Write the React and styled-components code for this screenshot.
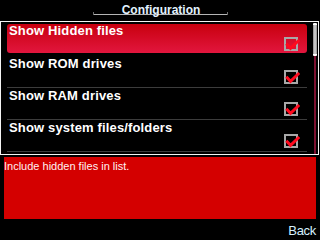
import React from "react";
import styled, { createGlobalStyle } from "styled-components";

const Global = createGlobalStyle`
  html, body { margin: 0; padding: 0; background: #000; }
  body { width: 320px; height: 240px; overflow: hidden; font-family: "Liberation Sans", Arial, sans-serif; }
`;

const Screen = styled.div`
  width: 320px;
  height: 240px;
  background: #000;
  display: flex;
  flex-direction: column;
`;

const Header = styled.div`
  height: 21px;
`;

const TitleBar = styled.div`
  position: relative;
  width: 135px;
  height: 14px;
  margin-left: 93px;
  border-bottom: 1px solid #b4b4b4;
  text-align: center;
  &::before, &::after {
    content: "";
    position: absolute;
    bottom: -1px;
    width: 1px;
    height: 3px;
    background: #707070;
  }
  &::before { left: 0; }
  &::after { right: 0; }
`;

const Title = styled.span`
  font-size: 12px;
  line-height: 14px;
  font-weight: bold;
  color: #e2f2ff;
  padding-left: 1px;
`;

const Frame = styled.div`
  width: 319px;
  height: 134px;
  box-sizing: border-box;
  border: 1px solid #f4f4f4;
  display: flex;
  overflow: hidden;
`;

const List = styled.div`
  flex: 1;
  padding-top: 1px;
  overflow: hidden;
`;

const Row = styled.div`
  width: 300px;
  height: 32px;
  box-sizing: border-box;
  margin-left: 6px;
  border-bottom: 1px solid ${(p) => (p.$selected ? "transparent" : "#3c3c3c")};
`;

const Cell = styled.div`
  position: relative;
  height: 29px;
  margin-top: ${(p) => (p.$selected ? "1px" : "0")};
  border-radius: 3px;
  overflow: hidden;
  background: ${(p) =>
    p.$selected ? "linear-gradient(#c8000e, #e2163e)" : "transparent"};
`;

const Label = styled.div`
  padding-left: 2px;
  font-size: 13px;
  line-height: ${(p) => (p.$selected ? "14px" : "15px")};
  font-weight: bold;
  letter-spacing: 0.15px;
  color: #fff;
  white-space: nowrap;
`;

const Check = styled.svg`
  position: absolute;
  left: 277px;
  top: ${(p) => (p.$selected ? "13px" : "14px")};
  overflow: visible;
`;

const ScrollCol = styled.div`
  width: 8px;
  padding-top: 1px;
  display: flex;
  flex-direction: column;
  align-items: center;
`;

const Thumb = styled.div`
  width: 4px;
  height: 33px;
  box-sizing: border-box;
  margin-left: 1px;
  border-radius: 1px;
  background: linear-gradient(90deg, #8a8a8a, #d8d8d8 50%, #8a8a8a);
  border-top: 2px solid #fff;
  border-bottom: 2px solid #fff;
`;

const Track = styled.div`
  flex: 1;
  width: 2px;
  margin-left: 1px;
  background: #7c1030;
`;

const Description = styled.div`
  margin: 2px 4px 0 4px;
  height: 62px;
  box-sizing: border-box;
  padding-top: 3px;
  background: #d40000;
  font-size: 11px;
  line-height: 13px;
  color: #fff2f2;
`;

const Footer = styled.div`
  display: flex;
  justify-content: flex-end;
  padding: 4px 4px 0 0;
`;

const SoftKey = styled.span`
  font-size: 13px;
  line-height: 15px;
  color: #d6f0ff;
  letter-spacing: -0.3px;
`;

const CheckIcon = ({ selected }) => (
  <Check $selected={selected} width="14" height="14" viewBox="0 0 14 14">
    <rect x="1" y="1" width="12" height="12" fill="none" stroke="#a8a8a8" strokeWidth="2" />
    <polyline
      points="2.3,6.8 6.5,11.3 15.2,3"
      fill="none"
      stroke="#ff0a1e"
      strokeWidth="3"
      strokeLinejoin="miter"
    />
  </Check>
);

const items = [
  { label: "Show Hidden files", checked: true, selected: true },
  { label: "Show ROM drives", checked: true },
  { label: "Show RAM drives", checked: true },
  { label: "Show system files/folders", checked: true },
  { label: "Sort by name", checked: true },
];

export default function App() {
  return (
    <Screen>
      <Global />
      <Header>
        <TitleBar>
          <Title>Configuration</Title>
        </TitleBar>
      </Header>
      <Frame>
        <List>
          {items.map((it) => (
            <Row key={it.label} $selected={it.selected}>
              <Cell $selected={it.selected}>
                <Label $selected={it.selected}>{it.label}</Label>
                {it.checked && <CheckIcon selected={it.selected} />}
              </Cell>
            </Row>
          ))}
        </List>
        <ScrollCol>
          <Thumb />
          <Track />
        </ScrollCol>
      </Frame>
      <Description>Include hidden files in list.</Description>
      <Footer>
        <SoftKey>Back</SoftKey>
      </Footer>
    </Screen>
  );
}
